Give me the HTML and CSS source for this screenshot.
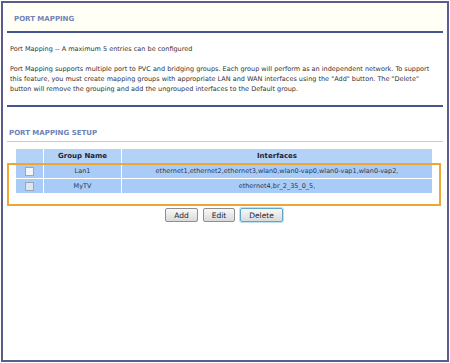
FILE: index.html
```html
<!DOCTYPE html>
<html>
<head>
<link rel="stylesheet" href="styles.css">
</head>
<body>

<div class="frame">
	<div class="title">PORT MAPPING</div>
	<div class="rule"></div>

	<div class="intro">
		<p>Port Mapping -- A maximum 5 entries can be configured</p>
		<p>Port Mapping supports multiple port to PVC and bridging groups. Each group will perform as an independent network. To support this feature, you must create mapping groups with appropriate LAN and WAN interfaces using the "Add" button. The "Delete" button will remove the grouping and add the ungrouped interfaces to the Default group.</p>
	</div>
	<div class="rule"></div>

	<div class="subtitle">PORT MAPPING SETUP</div>
	<div class="thin"></div>

	<div class="grid">
		<table class="groups">
			<tr>
				<th class="sel"></th><th class="name">Group Name</th><th>Interfaces</th>
			</tr>
			<tr>
				<td class="sel"><span class="box"></span></td>
				<td>Lan1</td>
				<td>ethernet1,ethernet2,ethernet3,wlan0,wlan0-vap0,wlan0-vap1,wlan0-vap2,</td>
			</tr>
			<tr>
				<td class="sel"><span class="box off"></span></td>
				<td>MyTV</td>
				<td>ethernet4,br_2_35_0_5,</td>
			</tr>
		</table>
		<div class="mark"></div>
	</div>

	<div class="buttons">
		<button>Add</button>
		<button>Edit</button>
		<button class="focus">Delete</button>
	</div>
</div>

</body>
</html>
```

FILE: styles.css
```css
body {
	margin: 0;
	font-family: "DejaVu Sans", sans-serif;
	font-size: 6.5px;
	color: #333333;
}

.frame {
	margin: 1px;
	width: 448px;
	height: 361px;
	box-sizing: border-box;
	border: 2px solid #5c5c8a;
	padding: 0 4px;
	background: #ffffff;
}

.title {
	height: 28px;
	box-sizing: border-box;
	padding: 12px 7px 0;
	font-weight: bold;
	font-size: 7px;
	color: #7083b6;
	background: #fffff6;
}

.rule {
	height: 2px;
	background: #47558f;
}

.intro {
	padding: 11px 3px 11px;
}

.intro p {
	margin: 0 0 10px;
	line-height: 10px;
}

.intro p:last-child {
	margin-bottom: 0;
}

.subtitle {
	margin-top: 22px;
	padding-left: 2px;
	font-weight: bold;
	font-size: 7px;
	line-height: 8px;
	color: #6f82b8;
}

.thin {
	margin-top: 4px;
	height: 1px;
	background: #c8cad2;
}

.grid {
	position: relative;
	margin: 6px 10px 0 8px;
}

.groups {
	width: 100%;
	border-collapse: separate;
	border-spacing: 1px;
	background: #ffffff;
}

.groups th, .groups td {
	height: 14px;
	padding: 0;
	text-align: center;
	background: #a8ccf7;
	color: #2a3550;
}

.groups th {
	background: #b3d2f6;
	font-weight: bold;
	font-size: 7px;
	color: #1e2438;
}

.groups .sel {
	width: 27px;
}

.groups .name {
	width: 77px;
}

.box {
	display: inline-block;
	width: 7px;
	height: 7px;
	border: 1px solid #9aa7b8;
	background: #f4f6f8;
	vertical-align: middle;
}

.box.off {
	background: #dfe5ec;
}

.mark {
	position: absolute;
	left: -8px;
	right: -8px;
	top: 15px;
	height: 43px;
	border: 2px solid #efa733;
	box-sizing: border-box;
}

.buttons {
	margin-top: 14px;
	display: flex;
	justify-content: center;
	gap: 5px;
	padding-right: 2px;
}

.buttons button {
	font-family: "DejaVu Sans", sans-serif;
	font-size: 7.5px;
	height: 14px;
	padding: 0 8px;
	border: 1px solid #8e8e8e;
	border-radius: 2px;
	background: linear-gradient(#f8f8f8, #dadada);
	color: #222222;
}

.buttons button.focus {
	border-color: #5fa6c9;
	box-shadow: 0 0 0 1px #bfe2f2;
}
```
